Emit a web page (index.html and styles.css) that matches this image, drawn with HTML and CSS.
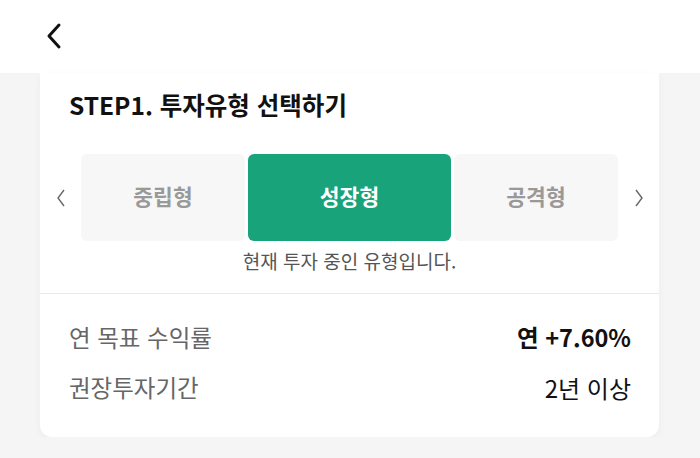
FILE: index.html
```html
<!DOCTYPE html>
<html lang="ko">
<head>
    <meta charset="UTF-8">
    <meta name="viewport" content="width=device-width, initial-scale=1.0">
    <title>투자유형 선택</title>
    <link rel="stylesheet" href="styles.css">
</head>
<body>

<header class="topbar">
    <button class="btn-voltar" aria-label="뒤로">
        <svg width="20" height="28" viewBox="0 0 20 28">
            <path d="M15 3 L5 14 L15 25" fill="none" stroke="#111" stroke-width="3" stroke-linecap="round" stroke-linejoin="round"/>
        </svg>
    </button>
</header>

<div class="card">
    <h2 class="titulo">STEP1. 투자유형 선택하기</h2>

    <div class="seletor">
        <span class="seta">
            <svg width="10" height="20" viewBox="0 0 10 20">
                <path d="M8 2 L2 10 L8 18" fill="none" stroke="#666" stroke-width="1.4"/>
            </svg>
        </span>
        <div class="tipos">
            <div class="tipo">중립형</div>
            <div class="tipo ativo">성장형</div>
            <div class="tipo">공격형</div>
        </div>
        <span class="seta">
            <svg width="10" height="20" viewBox="0 0 10 20">
                <path d="M2 2 L8 10 L2 18" fill="none" stroke="#666" stroke-width="1.4"/>
            </svg>
        </span>
    </div>
    <p class="legenda">현재 투자 중인 유형입니다.</p>

    <div class="info">
        <div class="linha">
            <span class="rotulo">연 목표 수익률</span>
            <span class="valor forte">연 +7.60%</span>
        </div>
        <div class="linha">
            <span class="rotulo">권장투자기간</span>
            <span class="valor">2년 이상</span>
        </div>
    </div>
</div>

</body>
</html>
```

FILE: styles.css
```css
body {
    font-family: 'Noto Sans CJK KR', 'Noto Sans', sans-serif;
    margin: 0;
    padding: 0;
    background-color: #f5f5f5;
    color: #111;
}

.topbar {
    height: 73px;
    background-color: #fff;
    display: flex;
    align-items: center;
    padding-left: 44px;
}

.btn-voltar {
    border: none;
    background: none;
    padding: 0;
    margin-top: -2px;
    display: flex;
    cursor: pointer;
}

.card {
    margin: 0 41px 0 40px;
    background-color: #fff;
    border-radius: 0 0 12px 12px;
    box-shadow: 0 3px 8px rgba(0, 0, 0, 0.04);
    padding-bottom: 25px;
}

.titulo {
    margin: 0;
    padding: 17px 29px 0;
    font-size: 24.5px;
    line-height: 30px;
    font-weight: bold;
    color: #111;
}

.seletor {
    display: flex;
    align-items: center;
    margin-top: 34px;
}

.seta {
    width: 41px;
    display: flex;
    justify-content: center;
}

.tipos {
    flex: 1;
    display: flex;
    gap: 3px;
}

.tipo {
    flex: 164px 0 0;
    height: 87px;
    box-sizing: border-box;
    padding-bottom: 5px;
    display: flex;
    align-items: center;
    justify-content: center;
    background-color: #f7f7f7;
    border-radius: 6px;
    font-size: 21.5px;
    font-weight: bold;
    color: #999;
}

.tipo.ativo {
    flex: 1;
    background-color: #18a37b;
    color: #fff;
}

.legenda {
    margin: 8px 0 0;
    text-align: center;
    font-size: 19px;
    line-height: 24px;
    color: #555;
    padding-bottom: 20px;
    border-bottom: 1px solid #eaeaea;
}

.info {
    padding: 18px 28px 0 29px;
}

.linha {
    display: flex;
    justify-content: space-between;
    align-items: center;
    height: 50px;
}

.rotulo {
    font-size: 23.5px;
    color: #666;
}

.valor {
    font-size: 24px;
    color: #111;
}

.valor.forte {
    font-size: 23.5px;
    font-weight: bold;
}
```
